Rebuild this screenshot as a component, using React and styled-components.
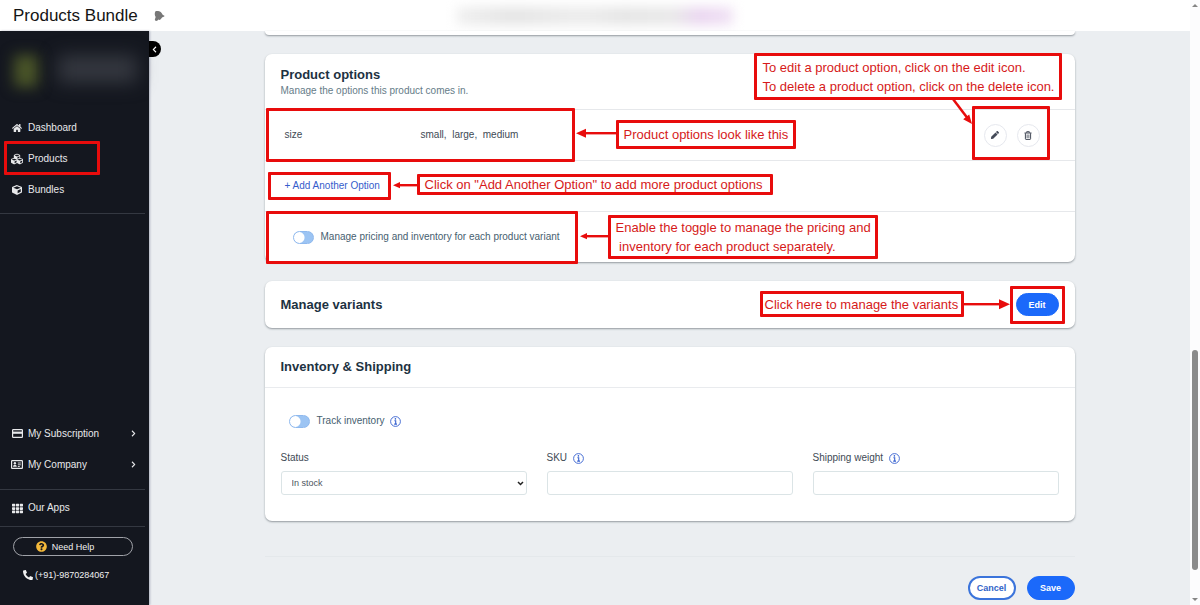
import { useState } from 'react';
import styled, { createGlobalStyle, css } from 'styled-components';
import {
  FaHome,
  FaCubes,
  FaCube,
  FaTh,
  FaQuestionCircle,
  FaPhoneAlt,
  FaChevronLeft,
  FaChevronRight,
  FaPen
} from 'react-icons/fa';

const GlobalStyle = createGlobalStyle`
  *, *::before, *::after {
    box-sizing: border-box;
  }
  body {
    margin: 0;
    background: #fff;
    color: #414a55;
    font-family: "Liberation Sans", Arial, sans-serif;
    font-size: 10px;
    line-height: 14px;
  }
  button, input, select {
    font-family: inherit;
  }
`;

const RED = '#e80c0c';
const BLUE = '#1b69fa';

/* ---------- Page frame ---------- */

const Frame = styled.div`
  display: flex;
  min-height: 100vh;
`;

const Page = styled.div`
  flex: 1;
  min-width: 0;
  display: flex;
  flex-direction: column;
`;

const TopBar = styled.header`
  height: 31px;
  padding: 0 13px;
  display: grid;
  grid-template-columns: 1fr auto 1fr;
  align-items: center;
  background: #fff;
`;

const Brand = styled.div`
  display: flex;
  align-items: center;
  gap: 16px;

  h1 {
    margin: 0;
    color: #151515;
    font-size: 17px;
    font-weight: 400;
    line-height: 20px;
  }
`;

const HiddenNotice = styled.div`
  width: 276px;
  height: 18px;
  background: linear-gradient(90deg, #efefef 0, #e4e4e4 20%, #ececec 45%, #e5e5e5 60%, #e8e8e8 78%, #ead5f0 88%, #f0e2f4 100%);
  filter: blur(6px);
`;

const Body = styled.div`
  flex: 1;
  display: flex;
`;

const ScrollRail = styled.div`
  width: 10px;
  display: flex;
  flex-direction: column;
  align-items: center;
  padding: 4px 0;
  background: #fcfcfd;
`;

const RailGap = styled.div`
  flex: ${(props) => props.$size};
`;

const Thumb = styled.div`
  flex: 220;
  width: 6px;
  border-radius: 3px;
  background: #8b8b8b;
`;

const RailArrow = styled.div`
  border: 3px solid transparent;
  border-top: 0 solid;
  border-bottom: 0 solid;
  ${(props) => (props.$up
    ? css`border-bottom: 3px solid #858585;`
    : css`border-top: 3px solid #858585;`)}
`;

/* ---------- Sidebar ---------- */

const Sidebar = styled.aside`
  position: relative;
  width: 149px;
  flex-shrink: 0;
  display: flex;
  flex-direction: column;
  background: #14171f;
  color: #e8e9eb;
  box-shadow: 1px 0 2px rgba(60, 65, 100, 0.35);
`;

const Account = styled.div`
  height: 81px;
  padding: 24px 12px 0 14px;
  display: flex;
  gap: 20px;
`;

const AccountLogo = styled.div`
  width: 24px;
  height: 32px;
  background: #4a5528;
  filter: blur(7px);
`;

const AccountName = styled.div`
  flex: 1;
  height: 28px;
  background: #34373f;
  filter: blur(9px);
`;

const CollapseTab = styled.button`
  position: absolute;
  top: 10px;
  left: 100%;
  width: 12px;
  height: 16px;
  padding: 0 2px 0 0;
  display: flex;
  align-items: center;
  justify-content: center;
  border: 0;
  border-radius: 0 8px 8px 0;
  background: #000;
  color: #fff;
`;

const Nav = styled.nav`
  position: relative;
  display: flex;
  flex-direction: column;
`;

const NavLink = styled.a`
  position: relative;
  height: ${(props) => (props.$tall ? 36 : 31)}px;
  padding: 0 12px 0 11px;
  display: flex;
  align-items: center;
  gap: 5px;
  color: inherit;
  text-decoration: none;

  span {
    flex: 1;
  }
`;

const NavIcon = styled.i`
  width: 12px;
  display: flex;
  justify-content: center;
`;

const Divider = styled.hr`
  width: 100%;
  margin: ${(props) => props.$space || 0}px 0 0;
  border: 0;
  border-top: 1px solid ${(props) => props.$color};
`;

const SideDivider = styled(Divider)`
  width: auto;
  margin-right: 4px;
`;

const SideFoot = styled.div`
  margin-top: auto;
  display: flex;
  flex-direction: column;
`;

const HelpButton = styled.button`
  height: 19px;
  margin: 10px 16px 12px 13px;
  padding: 0 16px 0 0;
  display: flex;
  align-items: center;
  justify-content: center;
  gap: 5px;
  border: 1px solid #a0a2a8;
  border-radius: 10px;
  background: transparent;
  color: #f1f1f1;
  font-size: 9px;

  svg {
    color: #f5b93a;
  }
`;

const PhoneLink = styled.a`
  margin-bottom: 23px;
  padding-left: 23px;
  display: flex;
  align-items: center;
  gap: 2px;
  color: #f1f1f1;
  font-size: 9px;
  text-decoration: none;
`;

/* ---------- Main column ---------- */

const Main = styled.main`
  flex: 1;
  min-width: 0;
  padding: 0 16px;
  background: #ebeef1;
`;

const Column = styled.div`
  max-width: 810px;
  margin: 0 auto;
  display: flex;
  flex-direction: column;
  gap: 19px;
`;

const Card = styled.section`
  position: relative;
  border-radius: 7px;
  background: #fff;
  box-shadow: 0 1px 2px rgba(40, 50, 60, 0.45);
`;

const CardTail = styled(Card)`
  height: 4px;
  border-radius: 0 0 7px 7px;
`;

const CardHead = styled.div`
  position: relative;
  height: ${(props) => props.$height}px;
  padding: 0 16px;
  display: flex;
  align-items: center;
  justify-content: space-between;
`;

const CardTitle = styled.h2`
  margin: 0;
  color: #1d3242;
  font-size: 13px;
  line-height: 18px;
`;

const CardHint = styled.p`
  margin: 0;
  color: #667c88;
  font-size: 10px;
`;

const Row = styled.div`
  position: relative;
  height: 51px;
  padding: 0 20px;
  display: flex;
  align-items: center;
  border-top: 1px solid #e6e8eb;
`;

const OptionName = styled.div`
  width: 136px;
`;

const OptionValues = styled.div`
  flex: 1;
  white-space: pre;
`;

const IconGroup = styled.div`
  display: flex;
  gap: 10px;
  margin-right: 15px;
`;

const IconButton = styled.button`
  width: 23px;
  height: 23px;
  padding: 0;
  display: flex;
  align-items: center;
  justify-content: center;
  border: 1px solid #e6e8ee;
  border-radius: 50%;
  background: #fff;
  color: #444a58;
`;

const LinkButton = styled.button`
  padding: 0;
  border: 0;
  background: none;
  color: #355ccb;
  font-size: 10px;
  line-height: 14px;
`;

const Toggle = styled.label`
  display: flex;
  align-items: center;
  gap: 7px;
  padding-left: 8px;
  color: #47606f;

  input {
    width: 21px;
    height: 13px;
    margin: 0;
    appearance: none;
    border: 1px solid #8fb9ee;
    border-radius: 7px;
    background: radial-gradient(circle at 5px 50%, #fff 5px, #9cc4f3 6px);
  }

  input:checked {
    background: radial-gradient(circle at 14px 50%, #fff 5px, ${BLUE} 6px);
  }
`;

const ToggleLine = styled.div`
  display: flex;
  align-items: center;
  gap: 6px;
`;

const CardBody = styled.div`
  padding: 26px 16px;
  border-top: 1px solid #e9ebee;
`;

const Fields = styled.div`
  margin-top: 23px;
  display: grid;
  grid-template-columns: repeat(3, 1fr);
  column-gap: 20px;
`;

const Field = styled.div`
  display: flex;
  flex-direction: column;
  gap: 6px;
`;

const FieldLabel = styled.div`
  display: flex;
  align-items: center;
  gap: 6px;
`;

const control = css`
  width: 100%;
  height: 24px;
  border: 1px solid #dbe4e6;
  border-radius: 3px;
  background: #fff;
  color: #4d5560;
  font-size: 9px;
`;

const TextInput = styled.input`
  ${control}
  padding: 0 10px;
`;

const Select = styled.select`
  ${control}
  padding: 0 14px 0 10px;
  appearance: none;
  background: #fff url("data:image/svg+xml,%3Csvg xmlns='http://www.w3.org/2000/svg' width='7' height='5'%3E%3Cpath d='M1 1l2.500 2.500L6 1' fill='none' stroke='%23222' stroke-width='1.500'/%3E%3C/svg%3E") no-repeat right 2px center;
`;

const PillButton = styled.button`
  height: ${(props) => (props.$small ? 23 : 24)}px;
  width: ${(props) => (props.$small ? 43 : 48)}px;
  padding: 0;
  border: ${(props) => (props.$outline ? 2 : 1)}px solid ${(props) => (props.$outline ? '#3b74db' : BLUE)};
  border-radius: 12px;
  background: ${(props) => (props.$outline ? '#fff' : BLUE)};
  color: ${(props) => (props.$outline ? '#3164c8' : '#fff')};
  font-size: 9px;
  font-weight: 700;
`;

const Actions = styled.div`
  display: flex;
  justify-content: flex-end;
  gap: 11px;
`;

/* ---------- Walkthrough notes laid over the page ---------- */

const Highlight = styled.div`
  position: absolute;
  z-index: 1;
  left: ${(props) => props.$left}px;
  right: ${(props) => props.$right}px;
  top: ${(props) => props.$top}px;
  width: ${(props) => props.$width}px;
  height: ${(props) => props.$height}px;
  border: 3px solid ${RED};
  border-radius: 1px;
  pointer-events: none;
`;

const Note = styled(Highlight)`
  padding-left: ${(props) => props.$pad}px;
  display: flex;
  align-items: center;
  background: #fff;
  color: #d61a1a;
  font-size: 13px;
  line-height: 19px;
  white-space: pre;
`;

const ArrowSvg = styled.svg`
  position: absolute;
  z-index: 1;
  left: ${(props) => props.$left}px;
  right: ${(props) => props.$right}px;
  top: ${(props) => props.$top}px;
  overflow: visible;
  pointer-events: none;
`;

// Horizontal arrow pointing left, or right when flipped.
function Arrow({ length, head = 10, flip, ...place }) {
  return (
    <ArrowSvg width={length} height="10" viewBox={`0 0 ${length} 10`} {...place}>
      <g transform={flip ? `translate(${length} 0) scale(-1 1)` : undefined} fill={RED}>
        <rect x={head - 1} y="4" width={length - head + 1} height="2.4" />
        <path d={`M0 5.2 L${head} ${5.2 - head * 0.45} V${5.2 + head * 0.45} Z`} />
      </g>
    </ArrowSvg>
  );
}

/* ---------- Icons ---------- */

function BellIcon() {
  return (
    <svg width="11" height="12" viewBox="0 0 12 12" fill="#777" aria-hidden="true">
      <path d="M1.6 .8C3 .2 5.6 .3 7.3 1.700 8.500 2.700 8.900 4.100 9.700 4.900 10.600 5.300 11.600 5.700 11.400 6.200 10.500 6.900 9.200 7.100 8.600 7.900 7.800 9.200 6.800 10.300 6 10.300 5.400 10.300 5.300 9.900 4.700 9.900 4.300 10.900 3.100 11.700 1.900 11.300 .9 10.900 .7 9.900 1.200 8.900L1.800 7.200C.8 5.600 .3 2.600 1.600 .8Z" />
    </svg>
  );
}

function CardIcon() {
  return (
    <svg width="11" height="9" viewBox="0 0 11 9" aria-hidden="true">
      <rect x=".6" y=".6" width="9.800" height="7.800" rx=".6" fill="none" stroke="currentColor" strokeWidth="1.200" />
      <rect x="1" y="2.600" width="9" height="2.200" fill="currentColor" />
    </svg>
  );
}

function IdIcon() {
  return (
    <svg width="12" height="9" viewBox="0 0 12 9" aria-hidden="true">
      <rect x=".6" y=".6" width="10.800" height="7.800" rx=".6" fill="none" stroke="currentColor" strokeWidth="1.200" />
      <circle cx="3.900" cy="3.300" r="1.200" fill="currentColor" />
      <path d="M2 6.700c0-1.300.8-2 1.900-2s1.900.7 1.900 2z" fill="currentColor" />
      <path d="M6.800 3h3M6.800 4.800h3M6.800 6.500h2" stroke="currentColor" strokeWidth=".9" />
    </svg>
  );
}

function TrashIcon() {
  return (
    <svg width="8" height="9" viewBox="0 0 8 9" fill="none" stroke="currentColor" aria-hidden="true">
      <path d="M.5 2h7M2.700 1.800V.7h2.600v1.100M1.400 2.200v5.600q0 .6.600.6h4q.6 0 .6-.6V2.200" strokeWidth="1" />
      <path d="M3 3.500v3.600M4 3.500v3.600M5 3.500v3.600" strokeWidth=".6" />
    </svg>
  );
}

function InfoIcon() {
  return (
    <svg width="11" height="11" viewBox="0 0 11 11" fill="none" stroke="#3560cf" aria-hidden="true">
      <circle cx="5.500" cy="5.500" r="4.900" strokeWidth=".9" />
      <path d="M4.400 4.700h1.300v3.300M4.200 8.100h2.800" strokeWidth="1.100" />
      <circle cx="5.400" cy="2.900" r=".8" fill="#3560cf" stroke="none" />
    </svg>
  );
}

function App() {
  const [perVariant, setPerVariant] = useState(false);
  const [track, setTrack] = useState(false);

  return (
    <>
      <GlobalStyle />
      <Frame>
        <Page>
          <TopBar>
            <Brand>
              <h1>Products Bundle</h1>
              <BellIcon />
            </Brand>
            <HiddenNotice />
          </TopBar>
          <Body>
            <Sidebar>
              <Account>
                <AccountLogo />
                <AccountName />
              </Account>
              <CollapseTab aria-label="Collapse menu"><FaChevronLeft size={7} /></CollapseTab>
              <Nav>
                <NavLink href="#dashboard">
                  <NavIcon><FaHome size={10} /></NavIcon>
                  <span>Dashboard</span>
                </NavLink>
                <NavLink href="#products">
                  <NavIcon><FaCubes size={12} /></NavIcon>
                  <span>Products</span>
                  <Highlight $left={4} $top={-2} $width={96} $height={34} />
                </NavLink>
                <NavLink href="#bundles">
                  <NavIcon><FaCube size={10} /></NavIcon>
                  <span>Bundles</span>
                </NavLink>
              </Nav>
              <SideDivider $space={8} $color="#343841" />
              <SideFoot>
                <NavLink href="#subscription">
                  <NavIcon><CardIcon /></NavIcon>
                  <span>My Subscription</span>
                  <FaChevronRight size={7} />
                </NavLink>
                <NavLink href="#company">
                  <NavIcon><IdIcon /></NavIcon>
                  <span>My Company</span>
                  <FaChevronRight size={7} />
                </NavLink>
                <SideDivider $space={9} $color="#343841" />
                <NavLink href="#apps" $tall>
                  <NavIcon><FaTh size={11} /></NavIcon>
                  <span>Our Apps</span>
                </NavLink>
                <SideDivider $color="#343841" />
                <HelpButton><FaQuestionCircle size={11} />Need Help</HelpButton>
                <PhoneLink href="tel:+919870284067"><FaPhoneAlt size={10} />(+91)-9870284067</PhoneLink>
              </SideFoot>
            </Sidebar>

            <Main>
              <Column>
                <CardTail />

                <Card>
                  <CardHead $height={55}>
                    <div>
                      <CardTitle>Product options</CardTitle>
                      <CardHint>Manage the options this product comes in.</CardHint>
                    </div>
                    <Note $right={13} $top={-1} $width={308} $height={47} $pad={6}>
                      {'To edit a product option, click on the edit icon.\nTo delete a product option, click on the delete icon.'}
                    </Note>
                    <ArrowSvg $right={103} $top={45} width="20" height="26" viewBox="0 0 20 26">
                      <path d="M1 0 L15 18.500" stroke={RED} strokeWidth="2.500" />
                      <path d="M20 25 L11.200 20.200 L17.200 15.400 Z" fill={RED} />
                    </ArrowSvg>
                  </CardHead>
                  <Row>
                    <OptionName>size</OptionName>
                    <OptionValues>{'small,  large,  medium'}</OptionValues>
                    <IconGroup>
                      <IconButton aria-label="Edit option"><FaPen size={8} /></IconButton>
                      <IconButton aria-label="Delete option"><TrashIcon /></IconButton>
                    </IconGroup>
                    <Highlight $left={1} $top={-2} $width={309} $height={54} />
                    <Arrow $left={311} $top={18} length={41} />
                    <Note $left={351} $top={10} $width={180} $height={29} $pad={5}>Product options look like this</Note>
                    <Highlight $right={25} $top={-4} $width={78} $height={54} />
                  </Row>
                  <Row>
                    <LinkButton>+ Add Another Option</LinkButton>
                    <Highlight $left={3} $top={11} $width={123} $height={28} />
                    <Arrow $left={128} $top={19} length={25} head={7} />
                    <Note $left={152} $top={13} $width={356} $height={21} $pad={5}>
                      Click on "Add Another Option" to add more product options
                    </Note>
                  </Row>
                  <Row>
                    <Toggle>
                      <input
                        type="checkbox"
                        checked={perVariant}
                        onChange={(event) => setPerVariant(event.target.checked)}
                      />
                      Manage pricing and inventory for each product variant
                    </Toggle>
                    <Highlight $left={1} $top={-1} $width={312} $height={53} />
                    <Arrow $left={315} $top={19} length={29} head={7} />
                    <Note $left={343} $top={3} $width={270} $height={44} $pad={5}>
                      {'Enable the toggle to manage the pricing and\n inventory for each product separately.'}
                    </Note>
                  </Row>
                </Card>

                <Card>
                  <CardHead $height={47}>
                    <CardTitle>Manage variants</CardTitle>
                    <PillButton $small>Edit</PillButton>
                    <Note $right={111} $top={10} $width={204} $height={26} $pad={2}>Click here to manage the variants</Note>
                    <Arrow $right={65} $top={18} length={46} head={11} flip />
                    <Highlight $right={10} $top={5} $width={55} $height={38} />
                  </CardHead>
                </Card>

                <Card>
                  <CardHead $height={40}>
                    <CardTitle>Inventory &amp; Shipping</CardTitle>
                  </CardHead>
                  <CardBody>
                    <ToggleLine>
                      <Toggle>
                        <input
                          type="checkbox"
                          checked={track}
                          onChange={(event) => setTrack(event.target.checked)}
                        />
                        Track inventory
                      </Toggle>
                      <InfoIcon />
                    </ToggleLine>
                    <Fields>
                      <Field>
                        <FieldLabel><label htmlFor="status">Status</label></FieldLabel>
                        <Select id="status">
                          <option>In stock</option>
                          <option>Out of stock</option>
                        </Select>
                      </Field>
                      <Field>
                        <FieldLabel><label htmlFor="sku">SKU</label><InfoIcon /></FieldLabel>
                        <TextInput id="sku" type="text" />
                      </Field>
                      <Field>
                        <FieldLabel><label htmlFor="weight">Shipping weight</label><InfoIcon /></FieldLabel>
                        <TextInput id="weight" type="text" />
                      </Field>
                    </Fields>
                  </CardBody>
                </Card>

                <Divider $space={16} $color="#e4e8eb" />
                <Actions>
                  <PillButton $outline>Cancel</PillButton>
                  <PillButton>Save</PillButton>
                </Actions>
              </Column>
            </Main>
          </Body>
        </Page>
        <ScrollRail aria-hidden="true">
          <RailArrow $up />
          <RailGap $size={343} />
          <Thumb />
          <RailGap $size={28} />
          <RailArrow />
        </ScrollRail>
      </Frame>
    </>
  );
}

export default App;
